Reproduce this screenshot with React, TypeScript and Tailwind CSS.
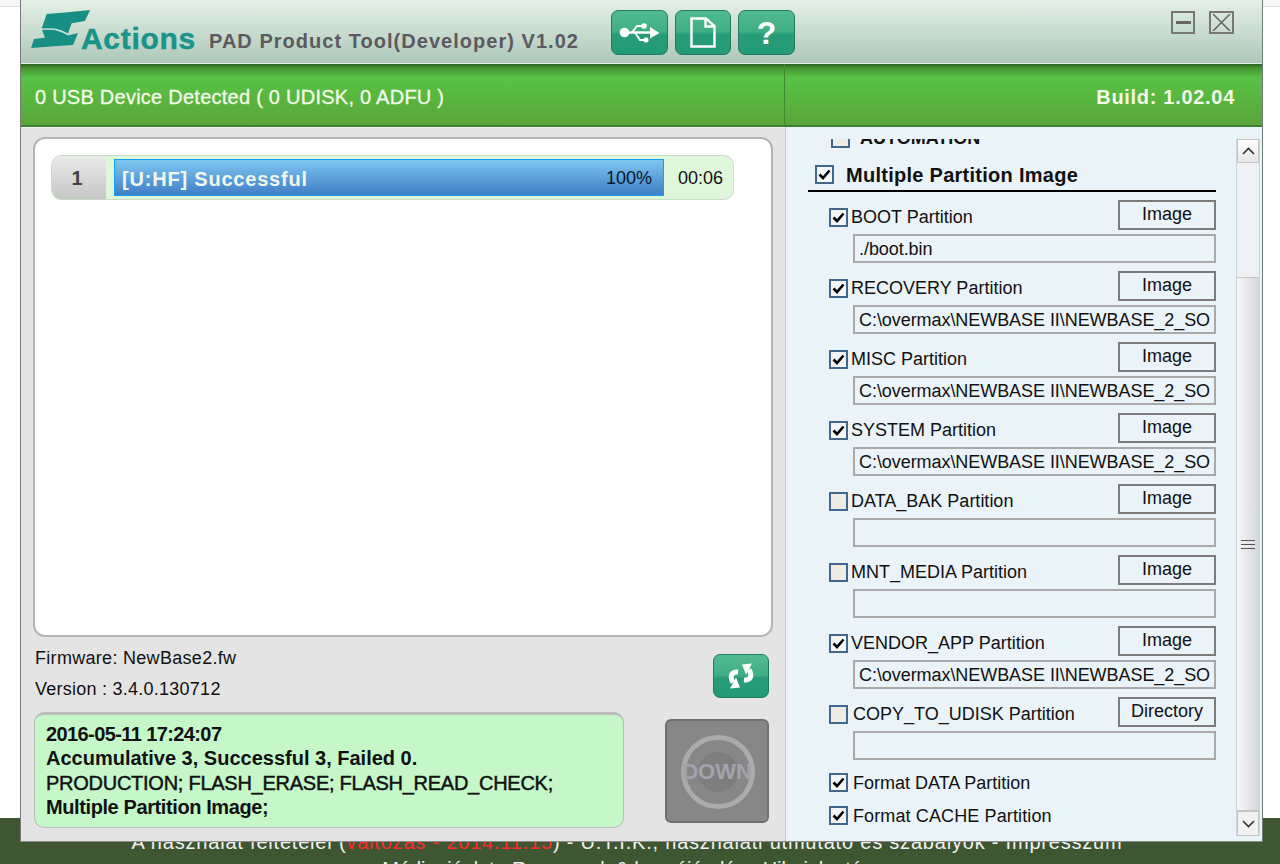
const partitions = [
  { name: 'BOOT Partition', checked: true, path: './boot.bin', action: 'Image' },
  { name: 'RECOVERY Partition', checked: true, path: 'C:\\overmax\\NEWBASE II\\NEWBASE_2_SO', action: 'Image' },
  { name: 'MISC Partition', checked: true, path: 'C:\\overmax\\NEWBASE II\\NEWBASE_2_SO', action: 'Image' },
  { name: 'SYSTEM Partition', checked: true, path: 'C:\\overmax\\NEWBASE II\\NEWBASE_2_SO', action: 'Image' },
  { name: 'DATA_BAK Partition', checked: false, path: '', action: 'Image' },
  { name: 'MNT_MEDIA Partition', checked: false, path: '', action: 'Image' },
  { name: 'VENDOR_APP Partition', checked: true, path: 'C:\\overmax\\NEWBASE II\\NEWBASE_2_SO', action: 'Image' },
  { name: 'COPY_TO_UDISK Partition', checked: false, path: '', action: 'Directory' },
];

function Check({ checked }: { checked: boolean }) {
  return (
    <span className={`flex h-[19px] w-[19px] shrink-0 items-center justify-center border-2 border-[#41678c] ${checked ? 'bg-[#f4f6f6]' : 'bg-[#ecebe6]'}`}>
      {checked && (
        <svg width="13" height="11" viewBox="0 0 13 11">
          <path d="M1.5 5.5 L5 9 L11.5 1.5" fill="none" stroke="#000" strokeWidth="2.6" />
        </svg>
      )}
    </span>
  );
}

function GreenButton({ className, children }: { className: string; children: React.ReactNode }) {
  return (
    <button className={`flex items-center justify-center rounded-[7px] border border-[#1f7c62] bg-[linear-gradient(#53ba90,#3fae85_48%,#269c78_55%,#249a77)] text-white ${className}`}>
      {children}
    </button>
  );
}

export default function App() {
  return (
    <div className="relative flex h-[864px] flex-col overflow-hidden bg-white font-['Liberation_Sans',sans-serif] text-[#111]">
      <div className="h-[7px] border-b border-[#dcdcdc] bg-[#f6f6f6]" />
      <div className="flex-1" />
      {/* page footer behind the tool window */}
      <div className="h-[46px] bg-[#3e5632] pr-[26px] pt-[11px] text-center text-[20px] leading-[26px] tracking-[0.8px] text-[#f0f0f0]">
        <p>
          A használat feltételei (<span className="text-[#ff2a2a]">változás - 2014.11.15</span>) - Ü.T.I.K., használati útmutató és szabályok - Impresszum
        </p>
        <p className="mt-[1px] tracking-[-0.1px]">Médiaajánlat - Rovancsok &amp; hozzájárulás - Hibajelentés</p>
      </div>

      {/* tool window */}
      <div className="absolute left-[20px] top-0 flex h-[842px] w-[1243px] flex-col border-x border-b border-l-[#7a7a7a] border-r-[#6f7f78] border-b-[#8a8a8a] bg-[#e4e4e4]">
        <header className="flex h-[64px] shrink-0 items-start border-b border-[#e8efe9] bg-gradient-to-b from-[#e4f0e7] to-[#aec8b8]">
          <div className="relative h-[63px] w-[180px] shrink-0">
            <svg className="absolute left-[4px] top-[5px]" width="70" height="50" viewBox="0 0 70 50">
              <path d="M21.7 9 L43 7.3 L65 5 L60 16 L46.7 18.3 L43 28.5 Q35 24 29 23.5 Q22 23 16.7 23.5 Z" fill="#178f85" />
              <path d="M17 25 Q23 24.5 29 25 Q35 26 43 30.5 L53 28 L48 40 L33 41 L6 43 L9 34 L20 32.7 Z" fill="#178f85" />
            </svg>
            <span className="absolute left-[60px] top-[21px] text-[30px] font-bold leading-[36px] tracking-[0.7px] text-[#1a948a] [-webkit-text-stroke:0.5px_#1a948a]">Actions</span>
          </div>
          <h1 className="ml-[8px] mt-[27px] w-[390px] shrink-0 whitespace-nowrap text-[20px] font-bold leading-[28px] tracking-[1.03px] text-[#5b5a60]">
            PAD Product Tool(Developer) V1.02
          </h1>
          <div className="ml-[12px] mt-[10px] flex gap-[7px]">
            <GreenButton className="h-[45px] w-[57px]">
              <svg width="42" height="22" viewBox="9 13 42 22" fill="#fff">
                <circle cx="14.5" cy="23.5" r="4.8" />
                <path d="M14 23.5 H42" stroke="#fff" strokeWidth="2.4" />
                <path d="M40 18 L49.5 24 L40 29.5 Z" />
                <path d="M22 23.5 L27 17 H34" fill="none" stroke="#fff" strokeWidth="2" />
                <circle cx="34" cy="17" r="2.8" />
                <path d="M25 23.5 L30 31 H35" fill="none" stroke="#fff" strokeWidth="2" />
                <rect x="33.5" y="28.5" width="5" height="5" rx="2" />
              </svg>
            </GreenButton>
            <GreenButton className="h-[45px] w-[56px]">
              <svg width="26" height="31" viewBox="0 0 26 31">
                <path d="M1.5 1.5 H16 L24.5 9 V29.5 H1.5 Z" fill="none" stroke="#fff" strokeWidth="2.4" />
                <path d="M15.5 2 V9.5 H24" fill="none" stroke="#fff" strokeWidth="2.4" />
              </svg>
            </GreenButton>
            <GreenButton className="h-[45px] w-[57px] text-[32px] font-bold">?</GreenButton>
          </div>
          <div className="ml-auto mr-[28px] mt-[11px] flex gap-[14px]">
            <span className="flex h-[23px] w-[24px] items-center justify-center border-2 border-[#777]">
              <span className="h-[3px] w-[15px] bg-[#666]" />
            </span>
            <span className="flex h-[23px] w-[25px] items-center justify-center border-2 border-[#777]">
              <svg width="19" height="17" viewBox="0 0 19 17">
                <path d="M1 0 L18 17 M18 0 L1 17" stroke="#666" strokeWidth="1.5" />
              </svg>
            </span>
          </div>
        </header>

        <div className="flex h-[63px] shrink-0 border-b-2 border-[#40802c] bg-[linear-gradient(#2f5f22_0,#46962f_4px,#58c246_14px,#58b63f_34px,#5aa53b_100%)] text-[20px] leading-[26px] text-[#f3fbe8]">
          <div className="flex w-[764px] items-center border-r border-[#3f8a2d] pl-[14px] pt-[4px] tracking-[0.25px] [-webkit-text-stroke:0.3px_#f3fbe8]">
            0 USB Device Detected ( 0 UDISK, 0 ADFU )
          </div>
          <div className="flex flex-1 items-center justify-end pr-[27px] pt-[4px] font-bold tracking-[0.7px]">Build: 1.02.04</div>
        </div>

        <div className="flex min-h-0 flex-1">
          {/* left side: device list, firmware, log */}
          <div className="flex w-[764px] shrink-0 flex-col border-t border-[#f4f4f4] pl-[12px] pr-[12px] pt-[9px]">
            <div className="h-[500px] rounded-[12px] border-2 border-[#b4b4b4] bg-white pl-[16px] pt-[16px]">
              <div className="flex h-[45px] w-[683px] overflow-hidden rounded-[10px] border border-[#c9dcc6] bg-[#def7da]">
                <div className="flex w-[54px] items-center justify-center bg-gradient-to-b from-[#eaeaea] to-[#c6c6c6] pr-[4px] text-[20px] font-bold text-[#444]">1</div>
                <div className="ml-[8px] mt-[3px] flex h-[37px] w-[550px] items-center justify-between border border-[#17a0f2] bg-gradient-to-b from-[#7fc6f0] to-[#3f7fc6] pl-[7px] pr-[11px] pt-[2px]">
                  <span className="text-[20px] font-bold tracking-[0.8px] text-[#f2f8ee]">[U:HF] Successful</span>
                  <span className="text-[18px] text-[#08162c]">100%</span>
                </div>
                <span className="ml-[14px] self-center pt-[2px] text-[18px]">00:06</span>
              </div>
            </div>

            <div className="flex h-[75px] justify-between pl-[2px]">
              <div className="pt-[6px] text-[18px] leading-[31px] tracking-[0.3px]">
                <p>Firmware: NewBase2.fw</p>
                <p className="tracking-[0.25px]">Version : 3.4.0.130712</p>
              </div>
              <GreenButton className="mr-[4px] mt-[17px] h-[44px] w-[56px]">
                <svg width="28" height="28" viewBox="18 14 28 27" fill="#fff">
                  <path d="M29 23.5 C23 23 20 27 24 34" fill="none" stroke="#fff" strokeWidth="5" />
                  <path d="M31 39 L21 40 L27 29 Z" />
                  <path d="M35 31.5 C41 32 44 28 40 21" fill="none" stroke="#fff" strokeWidth="5" />
                  <path d="M33 16 L43 15 L37 26 Z" />
                </svg>
              </GreenButton>
            </div>

            <div className="flex items-start justify-between">
              <div className="ml-[1px] h-[116px] w-[590px] rounded-[10px] border border-t-[3px] border-[#bcbcbc] bg-[#c6f7c8] pl-[11px] pt-[7px] text-[20px] font-bold leading-[24.4px]">
                <p className="tracking-[-0.6px]">2016-05-11 17:24:07</p>
                <p>Accumulative 3, Successful 3, Failed 0.</p>
                <p className="font-normal tracking-[-0.26px] [-webkit-text-stroke:0.45px_#111]">PRODUCTION; FLASH_ERASE; FLASH_READ_CHECK;</p>
                <p className="tracking-[-0.4px]">Multiple Partition Image;</p>
              </div>
              <button className="relative mr-[4px] mt-[7px] flex h-[104px] w-[104px] items-center justify-center rounded-[6px] border-2 border-[#6f6f6f] bg-[#878787]">
                <svg className="absolute left-[13px] top-[13px]" width="76" height="76" viewBox="0 0 76 76">
                  <circle cx="38" cy="38" r="34.5" fill="none" stroke="#ababab" strokeWidth="5" />
                  <circle cx="38" cy="38" r="20" fill="#7e7e7e" />
                </svg>
                <span className="relative text-[22px] font-bold text-[#a3a3ae]">DOWN</span>
              </button>
            </div>
          </div>

          {/* right side: partition options */}
          <div className="flex min-w-0 flex-1 border-l border-[#a9cfe2] bg-[#eaf3f7] pt-[12px]">
            <div className="min-w-0 flex-1 overflow-hidden pr-[20px] text-[18px] leading-[22px]">
              <div className="-mt-[12px] flex items-center gap-[10px] pl-[45px]">
                <Check checked={false} />
                <span className="font-bold">AUTOMATION</span>
              </div>
              <div className="ml-[22px] mt-[16px] flex h-[27px] items-start gap-[12px] border-b-2 border-black pl-[7px]">
                <Check checked />
                <span className="text-[20px] font-bold leading-[21px] tracking-[0.27px]">Multiple Partition Image</span>
              </div>
              <div className="mt-[8px]">
                {partitions.map((p) => (
                  <div key={p.name} className="h-[71px] pl-[43px]">
                    <div className="flex h-[30px] justify-between">
                      <label className={`flex items-center pt-[4px] ${p.name !== 'COPY_TO_UDISK Partition' ? 'gap-[3px]' : 'gap-[5px]'}`}>
                        <Check checked={p.checked} />
                        <span className="whitespace-nowrap">{p.name}</span>
                      </label>
                      <button className="h-[30px] w-[98px] border-2 border-[#7b7b7b] pb-[2px] text-[18px]">{p.action}</button>
                    </div>
                    <div className="ml-[24px] mt-[4px] h-[29px] whitespace-nowrap border-2 border-[#a9a9a9] pl-[4px] leading-[27px] tracking-[-0.06px]">{p.path}</div>
                  </div>
                ))}
              </div>
              <label className="-mt-[2px] ml-[43px] flex h-[33px] items-center gap-[5px]">
                <Check checked />
                Format DATA Partition
              </label>
              <label className="ml-[43px] flex h-[33px] items-center gap-[5px]">
                <Check checked />
                <span className="tracking-[0.12px]">Format CACHE Partition</span>
              </label>
            </div>

            {/* scrollbar */}
            <div className="mb-[5px] mr-[2px] flex w-[24px] shrink-0 flex-col border-x border-[#ccd4de] bg-[#edf1f4]">
              <div className="flex h-[24px] items-center justify-center border border-[#c4c4c4] bg-gradient-to-b from-white to-[#e6e6e6]">
                <svg width="13" height="8" viewBox="0 0 13 8"><path d="M1 7 L6.5 1.5 L12 7" fill="none" stroke="#333" strokeWidth="1.6" /></svg>
              </div>
              <div className="h-[114px]" />
              <div className="flex flex-1 flex-col items-center justify-center gap-[3px] border-y border-[#c4c4c4] bg-gradient-to-r from-[#f6f6f6] to-[#d4d8df]">
                <span className="h-[1px] w-[14px] bg-[#555]" />
                <span className="h-[1px] w-[14px] bg-[#555]" />
                <span className="h-[1px] w-[14px] bg-[#555]" />
              </div>
              <div className="flex h-[25px] items-center justify-center border border-[#c4c4c4] bg-[#f0f2f2]">
                <svg width="13" height="8" viewBox="0 0 13 8"><path d="M1 1 L6.5 6.5 L12 1" fill="none" stroke="#333" strokeWidth="1.6" /></svg>
              </div>
            </div>
          </div>
        </div>
      </div>
    </div>
  );
}
